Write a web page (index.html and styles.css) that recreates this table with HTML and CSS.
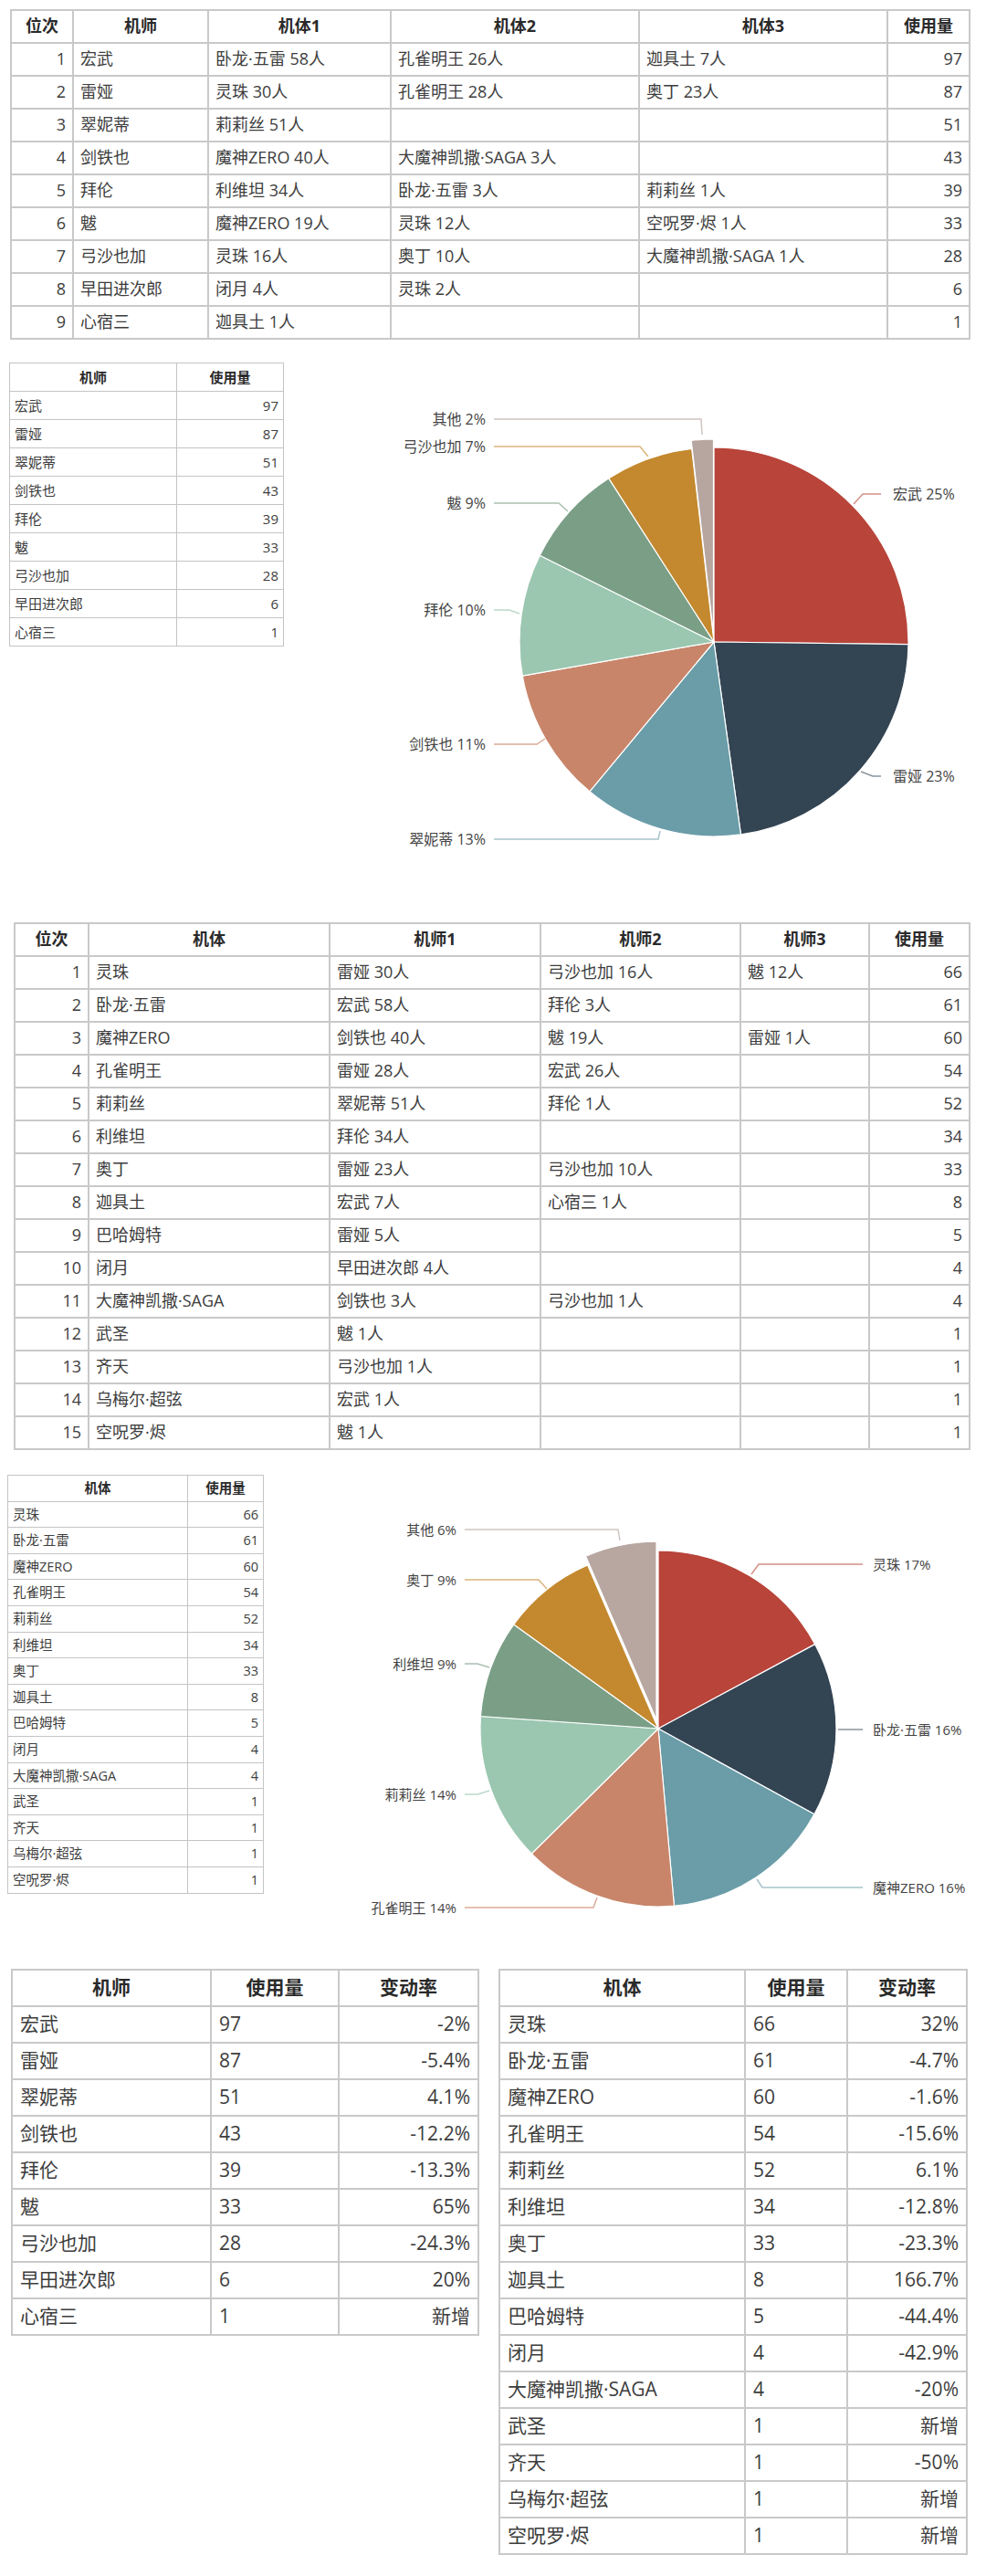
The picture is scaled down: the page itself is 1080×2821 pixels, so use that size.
FILE: index.html
```html
<!DOCTYPE html>
<html lang="zh-CN">
<head>
<meta charset="utf-8">
<title>机师与机体使用统计</title>
<link rel="stylesheet" href="styles.css">
</head>
<body>
<div class="page">

  <table class="grid big t1">
    <colgroup><col><col><col><col><col><col></colgroup>
    <tr><th>位次</th><th>机师</th><th>机体1</th><th>机体2</th><th>机体3</th><th>使用量</th></tr>
    <tr><td class="num">1</td><td>宏武</td><td>卧龙·五雷 58人</td><td>孔雀明王 26人</td><td>迦具土 7人</td><td class="num">97</td></tr>
    <tr><td class="num">2</td><td>雷娅</td><td>灵珠 30人</td><td>孔雀明王 28人</td><td>奥丁 23人</td><td class="num">87</td></tr>
    <tr><td class="num">3</td><td>翠妮蒂</td><td>莉莉丝 51人</td><td></td><td></td><td class="num">51</td></tr>
    <tr><td class="num">4</td><td>剑铁也</td><td>魔神ZERO 40人</td><td>大魔神凯撒·SAGA 3人</td><td></td><td class="num">43</td></tr>
    <tr><td class="num">5</td><td>拜伦</td><td>利维坦 34人</td><td>卧龙·五雷 3人</td><td>莉莉丝 1人</td><td class="num">39</td></tr>
    <tr><td class="num">6</td><td>魃</td><td>魔神ZERO 19人</td><td>灵珠 12人</td><td>空呪罗·烬 1人</td><td class="num">33</td></tr>
    <tr><td class="num">7</td><td>弓沙也加</td><td>灵珠 16人</td><td>奥丁 10人</td><td>大魔神凯撒·SAGA 1人</td><td class="num">28</td></tr>
    <tr><td class="num">8</td><td>早田进次郎</td><td>闭月 4人</td><td>灵珠 2人</td><td></td><td class="num">6</td></tr>
    <tr><td class="num">9</td><td>心宿三</td><td>迦具土 1人</td><td></td><td></td><td class="num">1</td></tr>
  </table>

  <section class="chart-row row1">
    <div class="side">
      <table class="grid small t2">
        <colgroup><col><col></colgroup>
        <tr><th>机师</th><th>使用量</th></tr>
        <tr><td>宏武</td><td class="num">97</td></tr>
        <tr><td>雷娅</td><td class="num">87</td></tr>
        <tr><td>翠妮蒂</td><td class="num">51</td></tr>
        <tr><td>剑铁也</td><td class="num">43</td></tr>
        <tr><td>拜伦</td><td class="num">39</td></tr>
        <tr><td>魃</td><td class="num">33</td></tr>
        <tr><td>弓沙也加</td><td class="num">28</td></tr>
        <tr><td>早田进次郎</td><td class="num">6</td></tr>
        <tr><td>心宿三</td><td class="num">1</td></tr>
      </table>
    </div>
    <svg class="pie pie1" width="760" height="638" viewBox="0 0 760 638">
      <g class="slices">
        <path fill="#b8443a" d="M462,331 L462,118 A213,213 0 0,1 674.98,333.60 Z"/>
        <path fill="#334453" d="M462,331 L674.98,333.60 A213,213 0 0,1 491.46,541.95 Z"/>
        <path fill="#6a9da8" d="M462,331 L491.46,541.95 A213,213 0 0,1 325.83,494.79 Z"/>
        <path fill="#c8856a" d="M462,331 L325.83,494.79 A213,213 0 0,1 252.27,368.17 Z"/>
        <path fill="#9bc7b0" d="M462,331 L252.27,368.17 A213,213 0 0,1 271.24,236.22 Z"/>
        <path fill="#7a9e86" d="M462,331 L271.24,236.22 A213,213 0 0,1 346.83,151.82 Z"/>
        <path fill="#c4892f" d="M462,331 L346.83,151.82 A213,213 0 0,1 437.70,119.39 Z"/>
        <path fill="#b7a6a0" d="M461.49,322.01 L437.19,110.40 A213,213 0 0,1 461.49,109.01 Z"/>
      </g>
      <g class="leaders">
        <polyline stroke="#cfc4c0" points="221,87 448,87 449,104"/>
        <polyline stroke="#dcb57e" points="221,117 381,117 390,128"/>
        <polyline stroke="#a9c0b0" points="221,179 292,179 302,188"/>
        <polyline stroke="#bcd9ca" points="221,296 238,296 249,300"/>
        <polyline stroke="#dcab97" points="221,443 268,443 277,437"/>
        <polyline stroke="#a6c4ca" points="221,547 401,547 403,538"/>
        <polyline stroke="#d49088" points="645,169 625,169 615,180"/>
        <polyline stroke="#8a959e" points="645,478 636,478 623,473"/>
      </g>
      <g class="lbl">
        <text x="212" y="87" text-anchor="end">其他 2%</text>
        <text x="212" y="117" text-anchor="end">弓沙也加 7%</text>
        <text x="212" y="179" text-anchor="end">魃 9%</text>
        <text x="212" y="296" text-anchor="end">拜伦 10%</text>
        <text x="212" y="443" text-anchor="end">剑铁也 11%</text>
        <text x="212" y="547" text-anchor="end">翠妮蒂 13%</text>
        <text x="658" y="169">宏武 25%</text>
        <text x="658" y="478">雷娅 23%</text>
      </g>
    </svg>
  </section>

  <table class="grid big t3">
    <colgroup><col><col><col><col><col><col></colgroup>
    <tr><th>位次</th><th>机体</th><th>机师1</th><th>机师2</th><th>机师3</th><th>使用量</th></tr>
    <tr><td class="num">1</td><td>灵珠</td><td>雷娅 30人</td><td>弓沙也加 16人</td><td>魃 12人</td><td class="num">66</td></tr>
    <tr><td class="num">2</td><td>卧龙·五雷</td><td>宏武 58人</td><td>拜伦 3人</td><td></td><td class="num">61</td></tr>
    <tr><td class="num">3</td><td>魔神ZERO</td><td>剑铁也 40人</td><td>魃 19人</td><td>雷娅 1人</td><td class="num">60</td></tr>
    <tr><td class="num">4</td><td>孔雀明王</td><td>雷娅 28人</td><td>宏武 26人</td><td></td><td class="num">54</td></tr>
    <tr><td class="num">5</td><td>莉莉丝</td><td>翠妮蒂 51人</td><td>拜伦 1人</td><td></td><td class="num">52</td></tr>
    <tr><td class="num">6</td><td>利维坦</td><td>拜伦 34人</td><td></td><td></td><td class="num">34</td></tr>
    <tr><td class="num">7</td><td>奥丁</td><td>雷娅 23人</td><td>弓沙也加 10人</td><td></td><td class="num">33</td></tr>
    <tr><td class="num">8</td><td>迦具土</td><td>宏武 7人</td><td>心宿三 1人</td><td></td><td class="num">8</td></tr>
    <tr><td class="num">9</td><td>巴哈姆特</td><td>雷娅 5人</td><td></td><td></td><td class="num">5</td></tr>
    <tr><td class="num">10</td><td>闭月</td><td>早田进次郎 4人</td><td></td><td></td><td class="num">4</td></tr>
    <tr><td class="num">11</td><td>大魔神凯撒·SAGA</td><td>剑铁也 3人</td><td>弓沙也加 1人</td><td></td><td class="num">4</td></tr>
    <tr><td class="num">12</td><td>武圣</td><td>魃 1人</td><td></td><td></td><td class="num">1</td></tr>
    <tr><td class="num">13</td><td>齐天</td><td>弓沙也加 1人</td><td></td><td></td><td class="num">1</td></tr>
    <tr><td class="num">14</td><td>乌梅尔·超弦</td><td>宏武 1人</td><td></td><td></td><td class="num">1</td></tr>
    <tr><td class="num">15</td><td>空呪罗·烬</td><td>魃 1人</td><td></td><td></td><td class="num">1</td></tr>
  </table>

  <section class="chart-row row2">
    <div class="side">
      <table class="grid small t4">
        <colgroup><col><col></colgroup>
        <tr><th>机体</th><th>使用量</th></tr>
        <tr><td>灵珠</td><td class="num">66</td></tr>
        <tr><td>卧龙·五雷</td><td class="num">61</td></tr>
        <tr><td>魔神ZERO</td><td class="num">60</td></tr>
        <tr><td>孔雀明王</td><td class="num">54</td></tr>
        <tr><td>莉莉丝</td><td class="num">52</td></tr>
        <tr><td>利维坦</td><td class="num">34</td></tr>
        <tr><td>奥丁</td><td class="num">33</td></tr>
        <tr><td>迦具土</td><td class="num">8</td></tr>
        <tr><td>巴哈姆特</td><td class="num">5</td></tr>
        <tr><td>闭月</td><td class="num">4</td></tr>
        <tr><td>大魔神凯撒·SAGA</td><td class="num">4</td></tr>
        <tr><td>武圣</td><td class="num">1</td></tr>
        <tr><td>齐天</td><td class="num">1</td></tr>
        <tr><td>乌梅尔·超弦</td><td class="num">1</td></tr>
        <tr><td>空呪罗·烬</td><td class="num">1</td></tr>
      </table>
    </div>
    <svg class="pie pie2" width="780" height="568" viewBox="0 0 780 568">
      <g class="slices">
        <path fill="#b8443a" d="M421,305 L421,110 A195,195 0 0,1 592.71,212.60 Z"/>
        <path fill="#334453" d="M421,305 L592.71,212.60 A195,195 0 0,1 591.95,398.78 Z"/>
        <path fill="#6a9da8" d="M421,305 L591.95,398.78 A195,195 0 0,1 438.48,499.21 Z"/>
        <path fill="#c8856a" d="M421,305 L438.48,499.21 A195,195 0 0,1 282.27,442.03 Z"/>
        <path fill="#9bc7b0" d="M421,305 L282.27,442.03 A195,195 0 0,1 226.47,291.48 Z"/>
        <path fill="#7a9e86" d="M421,305 L226.47,291.48 A195,195 0 0,1 262.79,191.00 Z"/>
        <path fill="#c4892f" d="M421,305 L262.79,191.00 A195,195 0 0,1 343.63,126.01 Z"/>
        <path fill="#b8a6a1" d="M418.97,295.21 L341.60,116.22 A195,195 0 0,1 418.97,100.21 Z"/>
      </g>
      <g class="leaders">
        <polyline stroke="#cfc4c0" points="209,87 377,87 379,99"/>
        <polyline stroke="#dcb57e" points="209,142 290,142 299,152"/>
        <polyline stroke="#a9c0b0" points="209,234 223,234 236,238"/>
        <polyline stroke="#bcd9ca" points="209,377 223,377 236,373"/>
        <polyline stroke="#dcab97" points="209,501 350,501 354,490"/>
        <polyline stroke="#d49088" points="645,125 531,125 523,136"/>
        <polyline stroke="#8a959e" points="645,306 618,306"/>
        <polyline stroke="#a6c4ca" points="645,479 535,479 529,470"/>
      </g>
      <g class="lbl lbl2">
        <text x="200" y="87" text-anchor="end">其他 6%</text>
        <text x="200" y="142" text-anchor="end">奥丁 9%</text>
        <text x="200" y="234" text-anchor="end">利维坦 9%</text>
        <text x="200" y="377" text-anchor="end">莉莉丝 14%</text>
        <text x="200" y="501" text-anchor="end">孔雀明王 14%</text>
        <text x="656" y="125">灵珠 17%</text>
        <text x="656" y="306">卧龙·五雷 16%</text>
        <text x="656" y="479">魔神ZERO 16%</text>
      </g>
    </svg>
  </section>

  <section class="compare">
    <table class="grid wide t5">
      <colgroup><col><col><col></colgroup>
      <tr><th>机师</th><th>使用量</th><th>变动率</th></tr>
      <tr><td>宏武</td><td>97</td><td class="num">-2%</td></tr>
      <tr><td>雷娅</td><td>87</td><td class="num">-5.4%</td></tr>
      <tr><td>翠妮蒂</td><td>51</td><td class="num">4.1%</td></tr>
      <tr><td>剑铁也</td><td>43</td><td class="num">-12.2%</td></tr>
      <tr><td>拜伦</td><td>39</td><td class="num">-13.3%</td></tr>
      <tr><td>魃</td><td>33</td><td class="num">65%</td></tr>
      <tr><td>弓沙也加</td><td>28</td><td class="num">-24.3%</td></tr>
      <tr><td>早田进次郎</td><td>6</td><td class="num">20%</td></tr>
      <tr><td>心宿三</td><td>1</td><td class="num">新增</td></tr>
    </table>
    <table class="grid wide t6">
      <colgroup><col><col><col></colgroup>
      <tr><th>机体</th><th>使用量</th><th>变动率</th></tr>
      <tr><td>灵珠</td><td>66</td><td class="num">32%</td></tr>
      <tr><td>卧龙·五雷</td><td>61</td><td class="num">-4.7%</td></tr>
      <tr><td>魔神ZERO</td><td>60</td><td class="num">-1.6%</td></tr>
      <tr><td>孔雀明王</td><td>54</td><td class="num">-15.6%</td></tr>
      <tr><td>莉莉丝</td><td>52</td><td class="num">6.1%</td></tr>
      <tr><td>利维坦</td><td>34</td><td class="num">-12.8%</td></tr>
      <tr><td>奥丁</td><td>33</td><td class="num">-23.3%</td></tr>
      <tr><td>迦具土</td><td>8</td><td class="num">166.7%</td></tr>
      <tr><td>巴哈姆特</td><td>5</td><td class="num">-44.4%</td></tr>
      <tr><td>闭月</td><td>4</td><td class="num">-42.9%</td></tr>
      <tr><td>大魔神凯撒·SAGA</td><td>4</td><td class="num">-20%</td></tr>
      <tr><td>武圣</td><td>1</td><td class="num">新增</td></tr>
      <tr><td>齐天</td><td>1</td><td class="num">-50%</td></tr>
      <tr><td>乌梅尔·超弦</td><td>1</td><td class="num">新增</td></tr>
      <tr><td>空呪罗·烬</td><td>1</td><td class="num">新增</td></tr>
    </table>
  </section>

</div>
</body>
</html>
```

FILE: styles.css
```css
html, body {
  margin: 0;
  padding: 0;
  background: #ffffff;
}

body {
  font-family: "Open Sans", "Noto Sans CJK SC", sans-serif;
  color: #3d3d3d;
}

.page {
  width: 1080px;
  min-height: 2821px;
}

/* ---------- generic grid tables ---------- */
.grid {
  border-collapse: collapse;
  table-layout: fixed;
}

.grid th,
.grid td {
  border: 2px solid #c9c9c9;
  padding: 0 6px;
  white-space: nowrap;
  overflow: hidden;
  line-height: 1.2;
  text-align: left;
  vertical-align: middle;
}

.grid th {
  font-weight: 700;
  color: #2a2a2a;
  text-align: center;
}

.grid td.num {
  text-align: right;
}

/* ---------- big ranking tables ---------- */
.big {
  font-size: 18px;
}

.big tr {
  height: 36px;
}

.big td {
  padding: 0 7px;
}

.t1 {
  margin: 10px 0 0 11px;
  width: 1050px;
}

.t1 col:nth-child(1) { width: 68px; }
.t1 col:nth-child(2) { width: 148px; }
.t1 col:nth-child(3) { width: 200px; }
.t1 col:nth-child(4) { width: 272px; }
.t1 col:nth-child(5) { width: 272px; }
.t1 col:nth-child(6) { width: 90px; }

.t3 {
  margin: 0 0 0 15px;
  width: 1046px;
}

.t3 col:nth-child(1) { width: 81px; }
.t3 col:nth-child(2) { width: 264px; }
.t3 col:nth-child(3) { width: 231px; }
.t3 col:nth-child(4) { width: 219px; }
.t3 col:nth-child(5) { width: 141px; }
.t3 col:nth-child(6) { width: 110px; }

/* ---------- chart rows ---------- */
.chart-row {
  display: flex;
  align-items: flex-start;
}

.row1 {
  height: 638px;
}

.row1 .side {
  padding: 25px 0 0 10px;
  box-sizing: border-box;
  flex: 0 0 320px;
}

.row2 {
  height: 568px;
}

.row2 .side {
  padding: 27px 0 0 8px;
  box-sizing: border-box;
  flex: 0 0 300px;
}

.pie {
  display: block;
  flex: 0 0 auto;
}

.small {
  font-size: 15px;
}

.small th,
.small td {
  border: 1.5px solid #c4c4c4;
  padding: 0 5px;
}

.t2 {
  width: 300px;
}

.t2 tr {
  height: 31px;
}

.t2 col:nth-child(1) { width: 183px; }
.t2 col:nth-child(2) { width: 117px; }

.t4 {
  width: 280px;
  font-size: 14.5px;
}

.t4 tr {
  height: 28.6px;
}

.t4 col:nth-child(1) { width: 197px; }
.t4 col:nth-child(2) { width: 83px; }

/* pie chart parts */
.slices path {
  stroke: #ffffff;
  stroke-width: 1.2;
  stroke-linejoin: round;
}

.leaders polyline {
  fill: none;
  stroke-width: 1.5;
}

.lbl text {
  font-family: "Open Sans", "Noto Sans CJK SC", sans-serif;
  font-size: 16px;
  fill: #444444;
  dominant-baseline: central;
}

.lbl2 text {
  font-size: 15px;
}

/* ---------- comparison tables ---------- */
.compare {
  display: flex;
  align-items: flex-start;
  gap: 21px;
  padding-left: 12px;
}

.wide {
  font-size: 21px;
}

.wide tr {
  height: 40px;
}

.wide td {
  padding: 0 8px;
}

.t5 {
  width: 511px;
}

.t5 col:nth-child(1) { width: 218px; }
.t5 col:nth-child(2) { width: 140px; }
.t5 col:nth-child(3) { width: 153px; }

.t6 {
  width: 512px;
}

.t6 col:nth-child(1) { width: 269px; }
.t6 col:nth-child(2) { width: 112px; }
.t6 col:nth-child(3) { width: 131px; }
```
